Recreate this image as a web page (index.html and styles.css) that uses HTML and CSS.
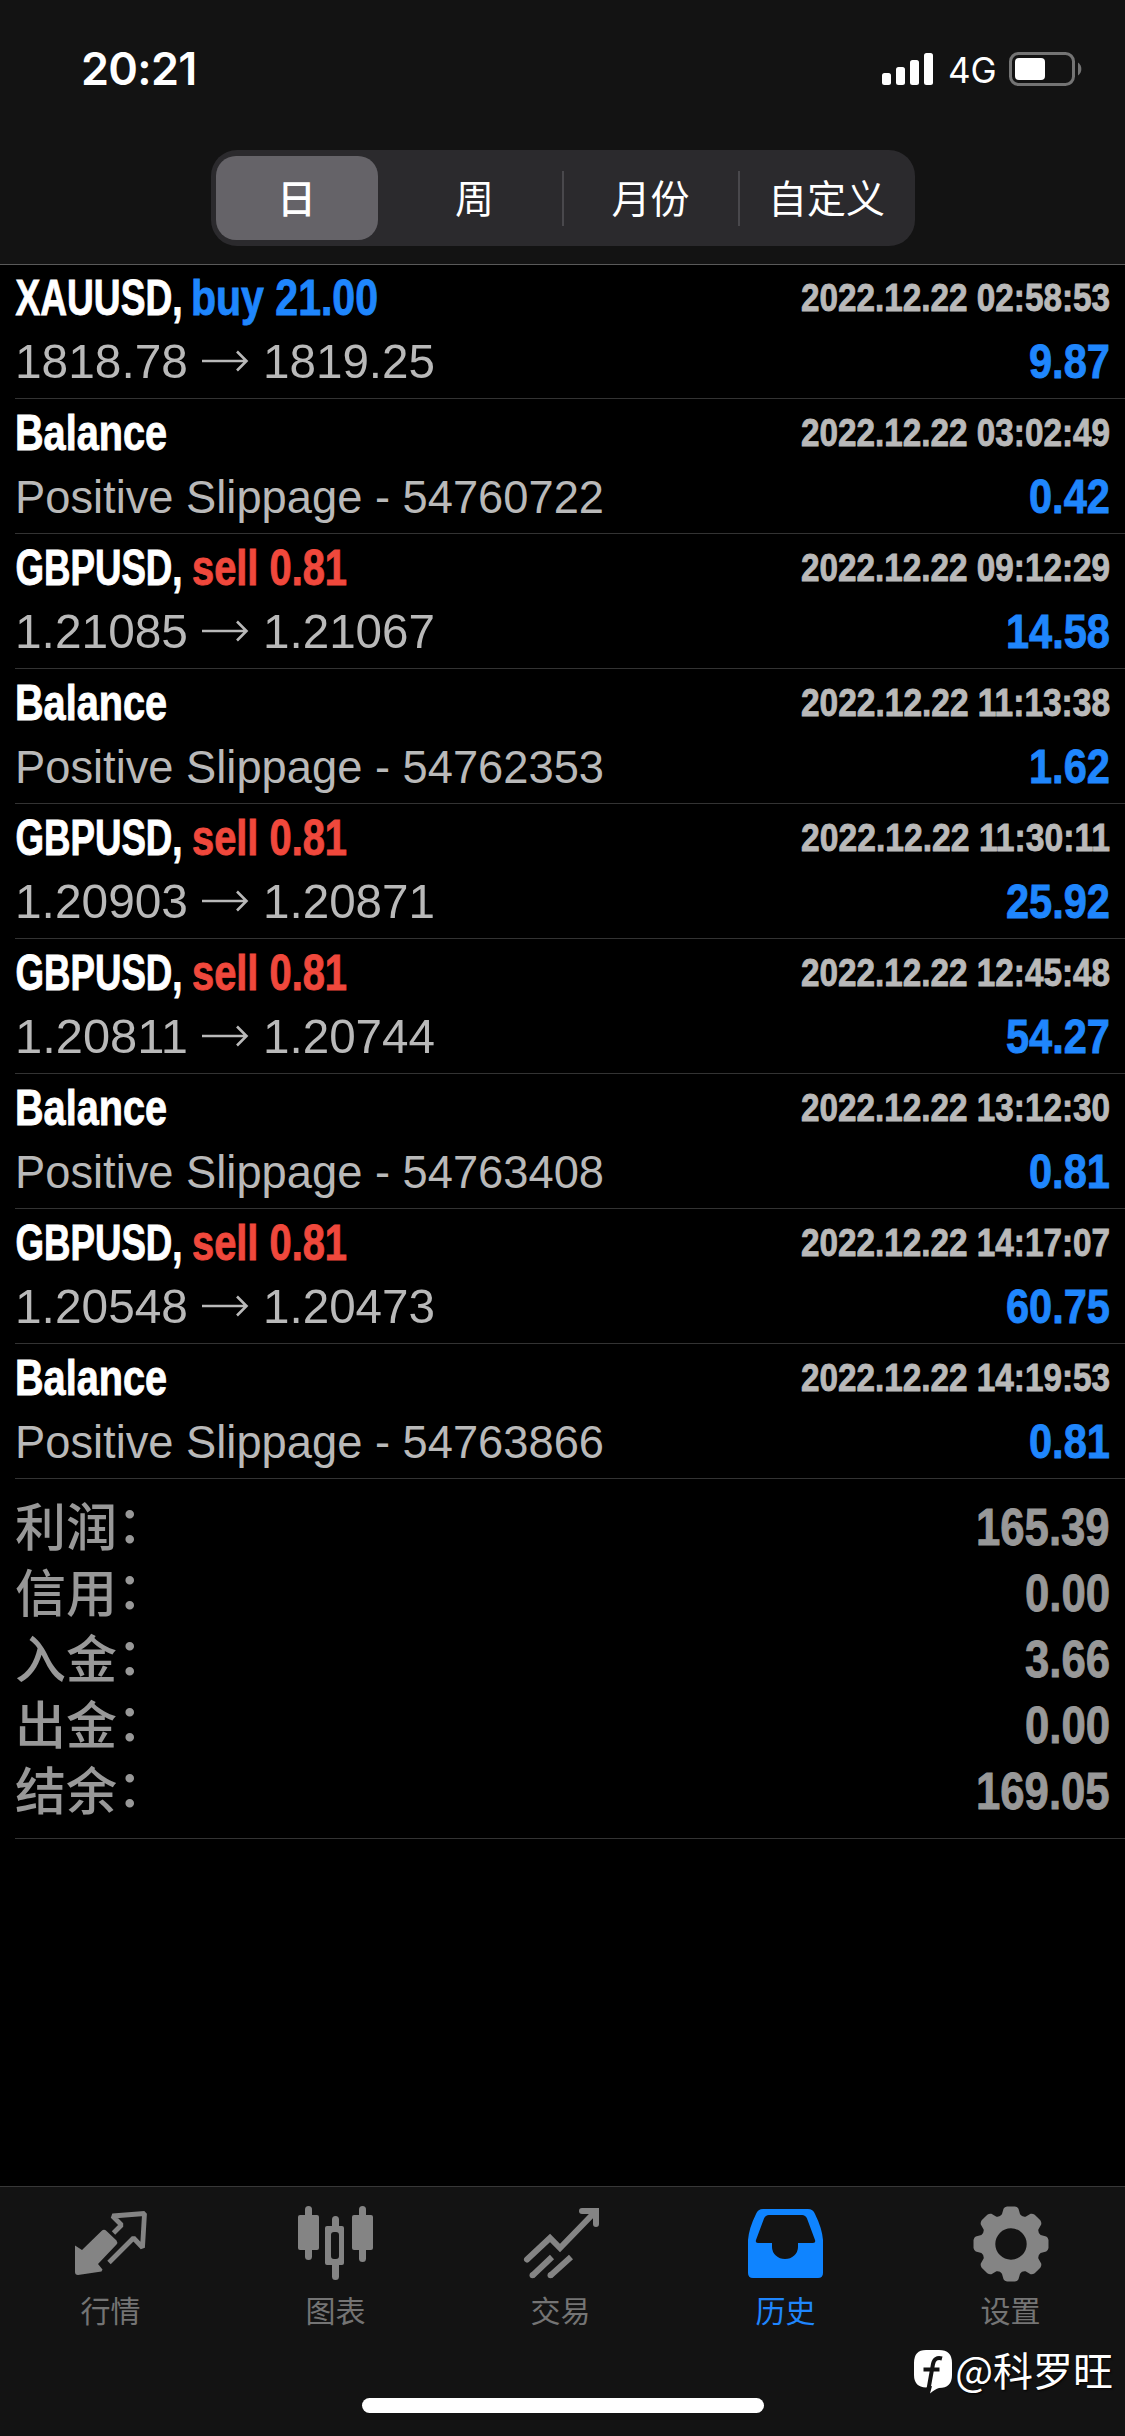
FILE: index.html
```html
<!DOCTYPE html>
<html lang="zh-CN">
<head>
<meta charset="utf-8">
<title>历史</title>
<link rel="stylesheet" href="styles.css">
</head>
<body>
<div class="app">
  <header class="top">
    <div class="status">
      <span class="clock">20:21</span>
      <svg class="signal" width="52" height="34" viewBox="0 0 52 34" fill="#fff"><rect x="0" y="21" width="9" height="12" rx="2.5"/><rect x="14" y="15" width="9" height="18" rx="2.5"/><rect x="28" y="8" width="9" height="25" rx="2.5"/><rect x="42" y="1" width="9" height="32" rx="2.5"/></svg>
      <span class="net">4G</span>
      <svg class="battery" width="74" height="34" viewBox="0 0 74 34"><rect x="1.5" y="1.5" width="63" height="31" rx="8" fill="none" stroke="#747474" stroke-width="3"/><rect x="6" y="6" width="30" height="22" rx="4" fill="#fff"/><path d="M69 10.500a8 8 0 0 1 0 13z" fill="#747474"/></svg>
    </div>
    <nav class="segments">
      <span class="seg on">日</span><span class="seg">周</span><span class="seg split">月份</span><span class="seg split">自定义</span>
    </nav>
  </header>

  <main class="list" id="list"></main>

  <footer class="tabs">
    <div class="tabrow">
      <div class="tab">
        <svg width="80" height="80" viewBox="4 0 80 80"><path d="M8 39.500L15 44 34.500 25Q37 22.500 39.500 25L49.500 34.500Q51 36.500 49.500 38.500L31 58 35.500 63.500 34.500 65.500 11 69Q8 69 8 66Z" fill="#848484"/><path d="M46.500 27L54.500 19 45.500 10 77.500 7.500 75.500 41.500 66.500 32 42 56.500" fill="none" stroke="#848484" stroke-width="4.800" stroke-linejoin="bevel"/></svg>
        <span>行情</span>
      </div>
      <div class="tab">
        <svg width="80" height="80" viewBox="0 0 80 80" fill="#848484"><rect x="9" y="0" width="7" height="54" rx="3.500"/><rect x="2" y="9" width="21" height="35" rx="2"/><rect x="63" y="0" width="7" height="56" rx="3.500"/><rect x="56" y="9" width="21" height="35" rx="2"/><path d="M36 20V13.500a3.500 3.500 0 0 1 7 0V20H46q2 0 2 2V57q0 2-2 2H43V70.500a3.500 3.500 0 0 1-7 0V59H31q-2 0-2-2V22q0-2 2-2ZM38 26q-3 0-3 3V50q0 3 3 3h2q3 0 3-3V29q0-3-3-3Z" fill-rule="evenodd"/></svg>
        <span>图表</span>
      </div>
      <div class="tab">
        <svg width="80" height="80" viewBox="1 0 80 80" fill="none" stroke="#848484" stroke-width="6"><path d="M7 53.500L30 32 40 42 73 8" stroke-linecap="round"/><path d="M62 5H76V18" stroke-linecap="round"/><path d="M32 51L12.500 69.500M51 51L30.500 69.500"/><g fill="#848484" stroke="none"><circle cx="12.500" cy="69.300" r="3"/><circle cx="30.500" cy="69.300" r="3"/></g></svg>
        <span>交易</span>
      </div>
      <div class="tab active">
        <svg width="80" height="80" viewBox="0 0 80 80"><path fill="#0f84ff" fill-rule="evenodd" d="M17 3H62Q67 3 69 8Q76 22 77 34V67Q77 72 72 72H7Q2 72 2 67V34Q3 22 10 8Q12 3 17 3ZM23 9Q19.500 9 18 12.500L10 34Q9 37 12 37H26V41a13 12 0 0 0 26 0V37H67Q70 37 69 34L61 12.500Q59.500 9 56 9Z"/></svg>
        <span>历史</span>
      </div>
      <div class="tab">
        <svg width="80" height="80" viewBox="-40 -38 80 80"><path id="gear" fill="#848484" fill-rule="evenodd"/></svg>
        <span>设置</span>
      </div>
    </div>
    <div class="mark">
      <svg width="42" height="46" viewBox="0 0 42 46"><path fill="#fff" d="M13 1H26Q39 1 39 14V26Q39 39 26 39Q22 40 17 44.500L19 37 13 38.500Q1 38 1 26V14Q1 1 13 1Z"/><path d="M29 9.500Q21.500 7.500 20 15L15.500 40M10.500 20.500H26.500" fill="none" stroke="#131313" stroke-width="4"/></svg>
      <span>@科罗旺</span>
    </div>
    <div class="home"></div>
  </footer>
</div>
<script src="app.js"></script>
</body>
</html>
```
FILE: styles.css
```css
* { box-sizing: border-box; }
body { margin: 0; background: #000; }
.app { width: 1125px; height: 2436px; display: flex; flex-direction: column; overflow: hidden; background: #000; font-family: "Liberation Sans", "Noto Sans CJK SC", sans-serif; color: #fff; }
.top { height: 265px; background: #131313; border-bottom: 1px solid #5a5a5a; flex: none; }
.status { height: 150px; padding: 52px 42px 0 81px; display: flex; align-items: flex-start; }
.clock { font: 600 45px/34px Inter, sans-serif; letter-spacing: -0.7px; margin-right: auto; }
.net { font: 400 35px/37px Inter, sans-serif; margin: 0 14px 0 14px; width: 47px; white-space: nowrap; }
.segments { width: 704px; height: 96px; margin: 0 auto; border-radius: 26px; background: #2b2a2d; display: grid; grid-template-columns: repeat(4, 1fr); padding: 6px 0; }
.seg { display: flex; align-items: center; justify-content: center; font: 400 39px/1 "Noto Sans CJK SC", sans-serif; position: relative; padding-bottom: 4px; }
.seg.on { background: #656368; border-radius: 20px; margin: 0 9px 0 5px; font-weight: 500; }
.seg.split::before { content: ""; position: absolute; left: -1px; top: 15px; width: 2px; height: 55px; background: #49484c; }
.list { flex: 1; }
.row { height: 135px; margin-left: 15px; padding-right: 13px; border-bottom: 1px solid #333; display: flex; flex-direction: column; }
.row:first-child { height: 134px; }
.row:first-child .line:first-child { margin-top: 3px; }
.line { display: flex; justify-content: space-between; height: 63px; margin-top: 4px; align-items: baseline; white-space: nowrap; }
.fit { display: block; overflow: visible; flex: none; }
.fit text { white-space: pre; }
.bold { font-weight: 700; font-family: "Liberation Sans Narrow", "Liberation Sans", sans-serif; stroke-width: 0.9px; }
.white { fill: #fff; stroke: #fff; }
.blue { fill: #1f86fd; stroke: #1f86fd; }
.red { fill: #f0483c; stroke: #f0483c; }
.gray { fill: #b9b9b9; }
.bold.gray { stroke: #b9b9b9; }
.dim { fill: #989898; stroke: #989898; }
.summary { margin-left: 15px; padding: 16px 13px 0 0; height: 360px; border-bottom: 1px solid #333; }
.total { height: 66px; display: flex; justify-content: space-between; color: #989898; font: 500 51px/66px "Noto Sans CJK SC", sans-serif; }
.name { height: 66px; margin-top: -4px; }
.colon { position: relative; top: -3px; }
.tabs { height: 250px; flex: none; background: #131313; border-top: 1px solid #383838; display: flex; flex-direction: column; }
.tabrow { display: grid; grid-template-columns: repeat(5, 1fr); height: 160px; padding-top: 19px; margin-left: -2px; margin-right: 2px; }
.tab { display: flex; flex-direction: column; align-items: center; color: #747474; font: 400 30px/44px "Noto Sans CJK SC", sans-serif; }
.tab svg { margin-bottom: 1px; flex: none; }
.tab.active { color: #1f86fd; }
.mark { height: 50px; padding-right: 12px; display: flex; justify-content: flex-end; align-items: center; font: 400 40px/48px "Noto Sans CJK SC", sans-serif; }
.mark span { margin-top: -6px; text-shadow: 1px 1px 2px #000; }
.home { width: 402px; height: 15px; border-radius: 8px; background: #fff; margin: 1px auto 0; }
```
FILE: app.js
```js
const deals = [
  ["XAUUSD", "buy 21.00", "02:58:53", "1818.78", "1819.25", "9.87"],
  ["", "54760722", "03:02:49", "", "", "0.42"],
  ["GBPUSD", "sell 0.81", "09:12:29", "1.21085", "1.21067", "14.58"],
  ["", "54762353", "11:13:38", "", "", "1.62"],
  ["GBPUSD", "sell 0.81", "11:30:11", "1.20903", "1.20871", "25.92"],
  ["GBPUSD", "sell 0.81", "12:45:48", "1.20811", "1.20744", "54.27"],
  ["", "54763408", "13:12:30", "", "", "0.81"],
  ["GBPUSD", "sell 0.81", "14:17:07", "1.20548", "1.20473", "60.75"],
  ["", "54763866", "14:19:53", "", "", "0.81"]
];
const totals = [["利润", "165.39"], ["信用", "0.00"], ["入金", "3.66"], ["出金", "0.00"], ["结余", "169.05"]];

// Condensed text run: fixed width, baseline measured from the top of its box.
const run = (x, base, width, size, cls, text) =>
  `<text x="${x}" y="${base}" font-size="${size}" class="${cls}" textLength="${width}" lengthAdjust="spacingAndGlyphs">${text}</text>`;
const box = (width, inner) => `<svg class="fit" width="${width}" height="60">${inner}</svg>`;
const numWidth = (s, d) => [...s].reduce((w, c) => w + (c === "." ? d / 2 : d), 0);

let html = "";
for (const [sym, op, time, from, to, profit] of deals) {
  const buy = op.startsWith("buy");
  const title = sym
    ? box(400, run(0.5, 47, 167, 50, "bold white", sym + ",") +
        run(buy ? 176 : 177, 47, buy ? 187 : 155, 50, "bold " + (buy ? "blue" : "red"), op))
    : box(400, run(0, 47, 152, 50, "bold white", "Balance"));
  const detail = sym
    ? box(500, run(0, 43, 173, 48.500, "gray", from) +
        '<path d="M187 26H231M222 16.500L231.500 26 222 35.500" fill="none" stroke="#b9b9b9" stroke-width="2.600"/>' +
        run(248, 43, 172, 48.500, "gray", to))
    : box(620, run(0, 43, 589, 45.500, "gray", "Positive Slippage - " + op));
  const pw = numWidth(profit, 23.100);
  html += `<div class="row"><div class="line">${title}${box(313, run(2, 43, 309, 39.500, "bold gray", "2022.12.22 " + time))}</div>` +
    `<div class="line">${detail}${box(pw + 3, run(1, 43, pw, 49, "bold blue", profit))}</div></div>`;
}
html += '<div class="summary">';
for (const [label, value] of totals) {
  const w = numWidth(value, 24.300);
  html += `<div class="total"><span class="name">${label}<span class="colon">：</span></span>${box(w + 3, run(1, 50, w, 51.500, "bold dim", value))}</div>`;
}
document.getElementById("list").innerHTML = html + "</div>";

// Eight-toothed gear with a round hole.
let d = "";
for (let i = 0; i < 8; i++) {
  const pt = (r, deg) => {
    const a = (i * 45 + deg - 90) * Math.PI / 180;
    return (r * Math.cos(a)).toFixed(2) + " " + (r * Math.sin(a)).toFixed(2);
  };
  d += `${i ? "L" : "M"}${pt(31, -17)}L${pt(36, -12)}Q${pt(37.500, -10)} ${pt(37.700, -6)}L${pt(37.700, 6)}Q${pt(37.500, 10)} ${pt(36, 12)}L${pt(31, 17)}Q${pt(29, 22.500)} ${pt(31, 28)}`;
}
document.getElementById("gear").setAttribute("d", d + "ZM-15.700 0a15.700 15.700 0 1 0 31.400 0a15.700 15.700 0 1 0-31.400 0Z");
```
